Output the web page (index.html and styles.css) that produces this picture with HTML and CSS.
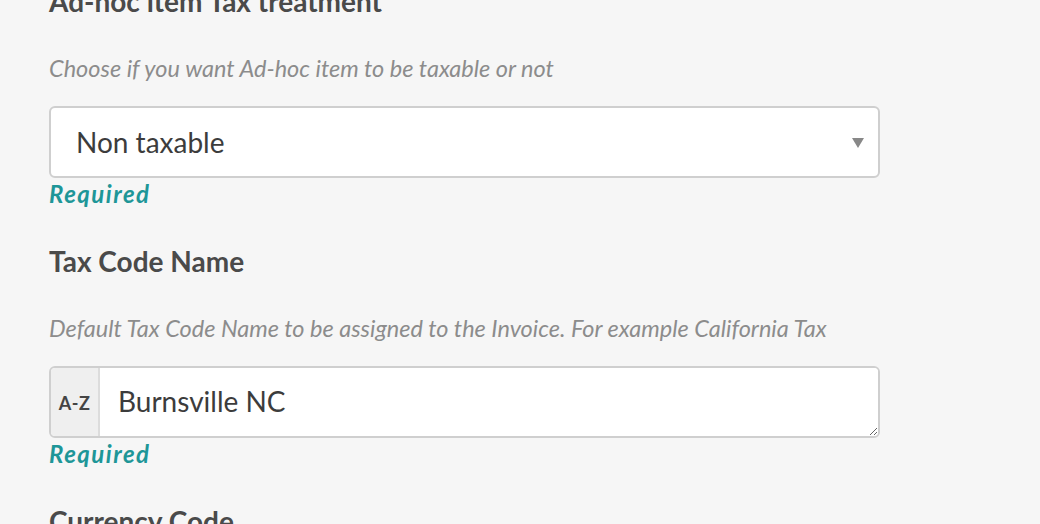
FILE: index.html
```html
<!DOCTYPE html>
<html>
<head>
<meta charset="utf-8">
<link rel="stylesheet" href="styles.css">
</head>
<body>
<div class="form">
  <div class="field">
    <h3 class="label">Ad-hoc item Tax treatment</h3>
    <p class="desc">Choose if you want Ad-hoc item to be taxable or not</p>
    <div class="box select">
      <span class="value">Non taxable</span>
      <span class="caret"></span>
    </div>
    <div class="required">Required</div>
  </div>
  <div class="field">
    <h3 class="label">Tax Code Name</h3>
    <p class="desc">Default Tax Code Name to be assigned to the Invoice. For example California Tax</p>
    <div class="box text">
      <span class="addon">A-Z</span>
      <textarea class="input">Burnsville NC</textarea>
    </div>
    <div class="required">Required</div>
  </div>
  <div class="field">
    <h3 class="label">Currency Code</h3>
  </div>
</div>
</body>
</html>
```
FILE: styles.css
```css
html, body {
  margin: 0;
  padding: 0;
  background: #f6f6f6;
  overflow: hidden;
}
body {
  font-family: Lato, "Open Sans", sans-serif;
}
.form {
  margin-top: -15.8px;
  padding-left: 49px;
  width: 831px;
}
.field {
  margin-bottom: 36.5px;
}
.label {
  margin: 0;
  font-size: 28px;
  line-height: 34px;
  font-weight: 700;
  color: #4a4a4a;
  white-space: nowrap;
}
.desc {
  margin: 35.7px 0 0;
  font-size: 23.5px;
  line-height: 28px;
  font-style: italic;
  color: #8c8c8c;
  white-space: nowrap;
}
.box {
  margin-top: 24.1px;
  height: 72px;
  box-sizing: border-box;
  border: 2px solid #cfcfcf;
  border-radius: 6px;
  background: #fff;
  display: flex;
  align-items: center;
  overflow: hidden;
}
.select {
  padding: 0 14px 0 25px;
  justify-content: space-between;
}
.value {
  font-size: 28px;
  line-height: 34px;
  color: #3c3c3c;
}
.caret {
  width: 0;
  height: 0;
  border-left: 6px solid transparent;
  border-right: 6px solid transparent;
  border-top: 10px solid #888;
  margin-top: 2px;
}
.text {
  align-items: stretch;
}
.addon {
  width: 49px;
  flex: none;
  background: #efefef;
  border-right: 2px solid #dcdcdc;
  display: flex;
  align-items: center;
  justify-content: center;
  font-size: 18px;
  font-weight: 700;
  color: #444;
  letter-spacing: 0.5px;
  padding-top: 2px;
  box-sizing: border-box;
}
.input {
  flex: 1;
  border: none;
  outline: none;
  margin: 0;
  padding: 16.2px 18px 0 18px;
  font-family: Lato, "Open Sans", sans-serif;
  font-size: 28px;
  line-height: 34px;
  color: #3c3c3c;
  background: #fff;
  resize: vertical;
  overflow: hidden;
}
.required {
  margin-top: 1.7px;
  font-size: 24px;
  line-height: 28px;
  font-weight: 700;
  font-style: italic;
  letter-spacing: 1.5px;
  color: #1e9698;
}
```
